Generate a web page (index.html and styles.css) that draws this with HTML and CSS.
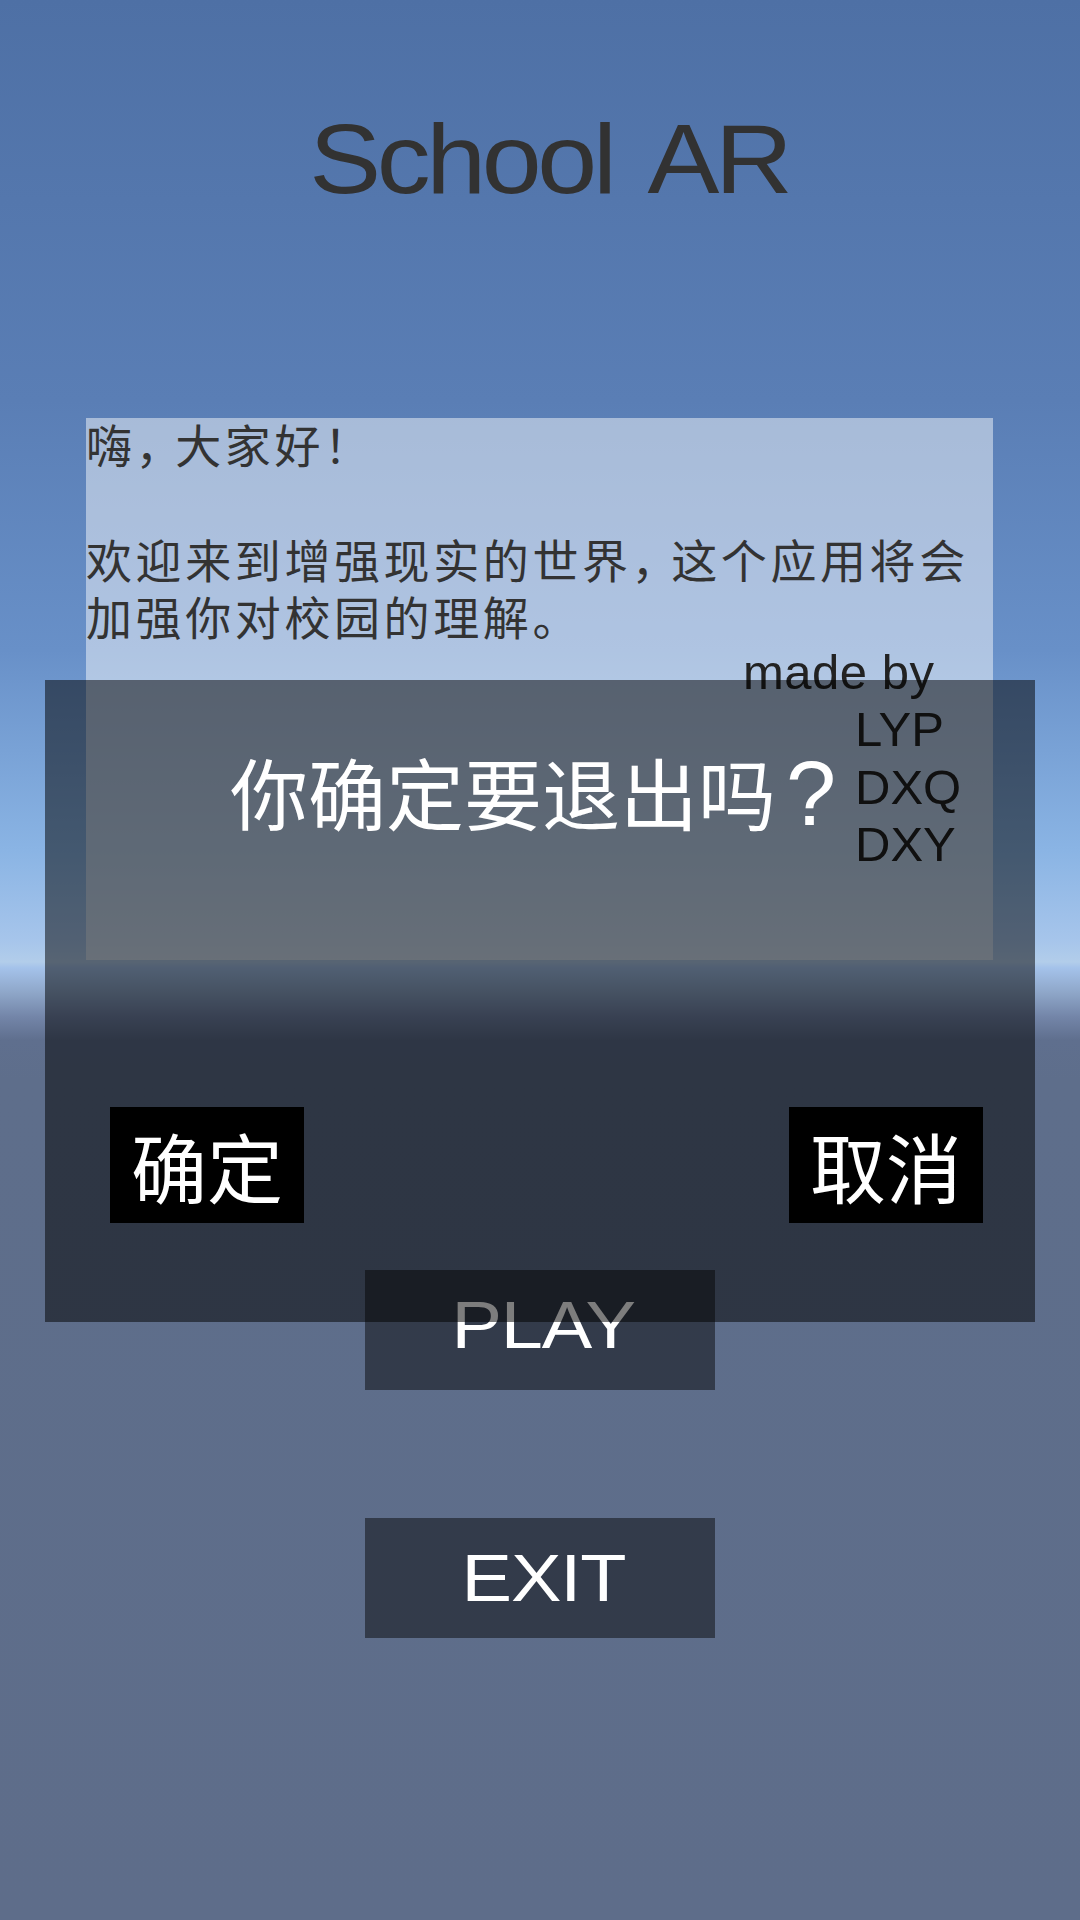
FILE: index.html
```html
<!DOCTYPE html>
<html lang="zh-CN">
<head>
<meta charset="utf-8">
<title>School AR</title>
<link rel="stylesheet" href="styles.css">
</head>
<body>
<main class="screen">
  <h1 class="title"><span class="stretch">School AR</span></h1>

  <section class="info">
    <div class="info-text">
      <p class="zh">嗨<span class="cm">，</span>大家好！</p>
      <p class="zh blank"></p>
      <p class="zh">欢迎来到增强现实的世界<span class="cm">，</span>这个应用将会</p>
      <p class="zh">加强你对校园的理解。</p>
      <p class="credit made">made by</p>
      <p class="credit name">LYP</p>
      <p class="credit name">DXQ</p>
      <p class="credit name">DXY</p>
    </div>
  </section>

  <button class="menu-btn play"><span class="stretch">PLAY</span></button>
  <button class="menu-btn exit"><span class="stretch">EXIT</span></button>

  <div class="dialog">
    <p class="dialog-msg">你确定要退出吗<span class="q">?</span></p>
    <div class="dialog-actions">
      <button class="dlg-btn">确定</button>
      <button class="dlg-btn">取消</button>
    </div>
  </div>
</main>
</body>
</html>
```

FILE: styles.css
```css
html, body {
  margin: 0;
  padding: 0;
}

body {
  width: 1080px;
  height: 1920px;
  overflow: hidden;
  font-family: "Liberation Sans", Arial, "Noto Sans CJK SC", sans-serif;
  background: linear-gradient(180deg,
    #4e70a5 0px,
    #5a7eb5 400px,
    #6890c8 650px,
    #8ab4e4 850px,
    #a6c5eb 940px,
    #b2cdea 962px,
    #a4c2ea 968px,
    #8ea6c8 993px,
    #7385a8 1017px,
    #5f6f8e 1040px,
    #5e6e8b 1080px,
    #5e6d8a 1920px);
}

.screen {
  position: relative;
  width: 1080px;
  height: 1920px;
  display: flex;
  flex-direction: column;
  align-items: flex-start;
}

.stretch {
  display: inline-block;
  transform: scaleX(1.1);
}

.title {
  margin: 104px 0 0 0;
  width: 100%;
  box-sizing: border-box;
  padding-left: 18px;
  height: 110px;
  line-height: 110px;
  text-align: center;
  font-family: "Liberation Sans", Arial, sans-serif;
  font-weight: normal;
  font-size: 98px;
  letter-spacing: -4px;
  word-spacing: 14px;
  color: #323232;
}

.info {
  margin: 204px 0 0 86px;
  width: 907px;
  height: 542px;
  background: rgba(255, 255, 255, 0.47);
}

.info-text {
  margin-top: -3px;
}

.info-text p {
  margin: 0;
  height: 57.3px;
  line-height: 57.3px;
  white-space: nowrap;
}

.zh {
  font-family: "Noto Sans CJK SC", sans-serif;
  font-size: 46px;
  letter-spacing: 3.6px;
  color: #333333;
}

.cm {
  letter-spacing: -6.4px;
}

.credit {
  font-family: "Liberation Sans", Arial, sans-serif;
  font-size: 49px;
  color: #222222;
}

.made {
  padding-left: 657px;
  letter-spacing: 0.5px;
}

.name {
  padding-left: 769px;
}

.menu-btn {
  margin: 0 0 0 365px;
  width: 350px;
  height: 120px;
  padding: 0 0 0 6px;
  border: 0;
  background: rgba(0, 0, 0, 0.46);
  color: #ffffff;
  font-family: "Liberation Sans", Arial, sans-serif;
  font-size: 67px;
  letter-spacing: -1px;
  line-height: 120px;
  text-align: center;
}

.menu-btn .stretch {
  transform: scaleX(1.13);
}

.play {
  margin-top: 310px;
  line-height: 110px;
  padding-bottom: 10px;
}

.exit {
  margin-top: 128px;
}

.dialog {
  position: absolute;
  left: 45px;
  top: 680px;
  width: 990px;
  height: 642px;
  background: rgba(0, 0, 0, 0.51);
  display: flex;
  flex-direction: column;
}

.dialog-msg {
  margin: 61px 0 0 0;
  padding-right: 14px;
  height: 100px;
  line-height: 100px;
  text-align: center;
  font-family: "Noto Sans CJK SC", sans-serif;
  font-size: 78px;
  color: #ffffff;
  white-space: nowrap;
}

.q {
  margin-left: 10px;
  font-family: "Liberation Sans", Arial, sans-serif;
  font-size: 90px;
}

.dialog-actions {
  margin-top: 266px;
  display: flex;
  justify-content: space-between;
  padding: 0 52px 0 65px;
}

.dlg-btn {
  width: 194px;
  height: 116px;
  padding: 0;
  border: 0;
  background: #000000;
  color: #ffffff;
  font-family: "Noto Sans CJK SC", sans-serif;
  font-size: 76px;
  line-height: 116px;
  text-align: center;
}
```
